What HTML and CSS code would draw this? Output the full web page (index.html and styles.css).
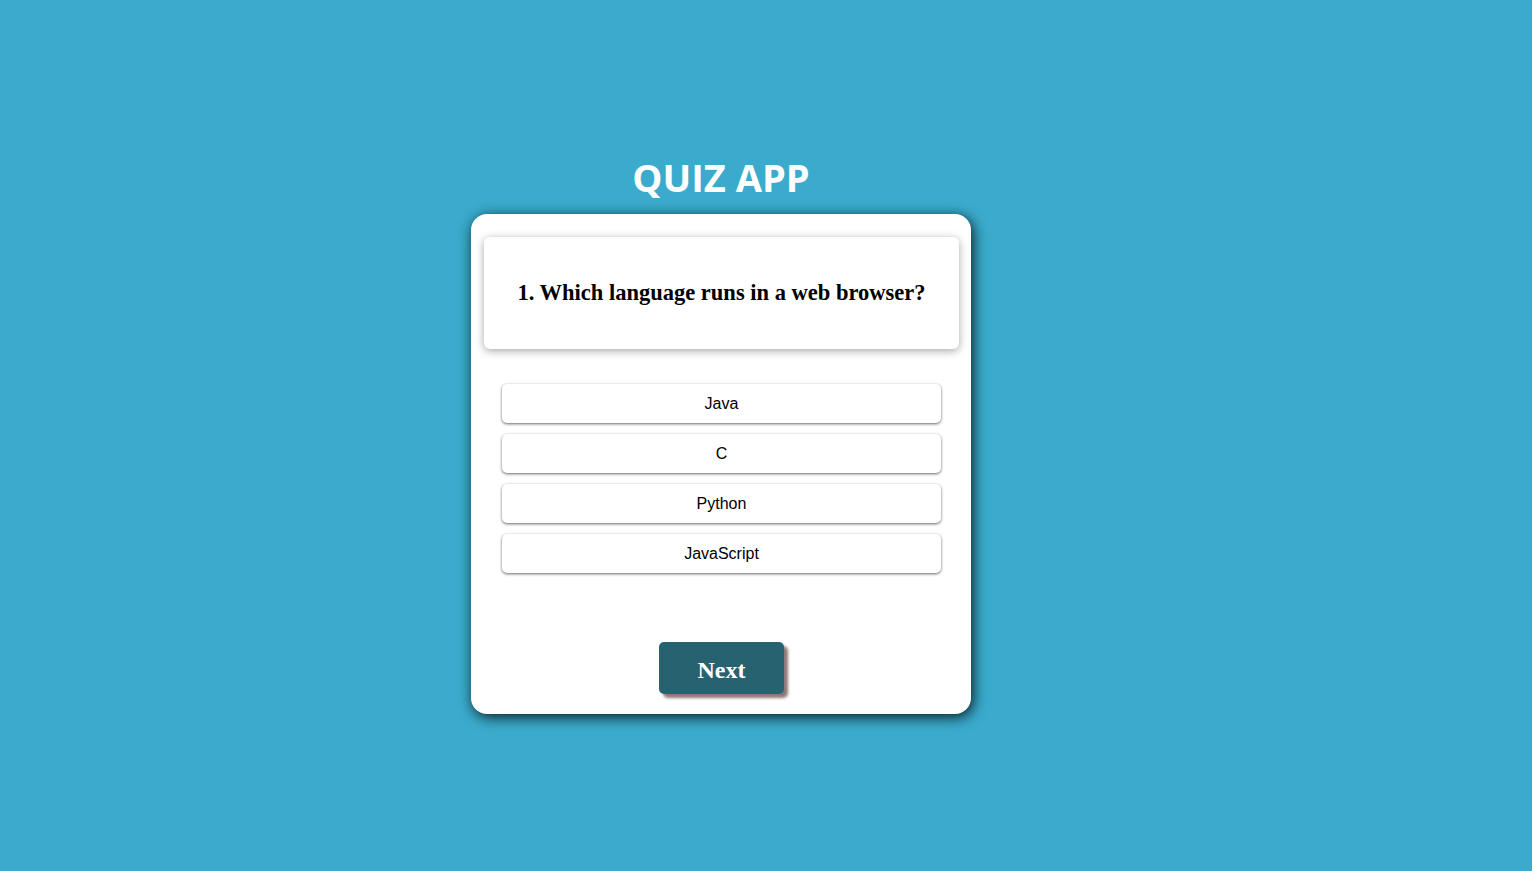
FILE: index.html
```html
<!DOCTYPE html>
<html lang="en">
<head>
<meta charset="utf-8">
<title>Quiz App</title>
<link rel="stylesheet" href="styles.css">
</head>
<body>
<main class="page">
  <h1 class="title">QUIZ APP</h1>
  <section class="card">
    <div class="question-box">
      <h2 class="question">1. Which language runs in a web browser?</h2>
    </div>
    <div class="options">
      <button class="option">Java</button>
      <button class="option">C</button>
      <button class="option">Python</button>
      <button class="option">JavaScript</button>
    </div>
    <div class="actions">
      <button class="next">Next</button>
    </div>
  </section>
</main>
</body>
</html>
```

FILE: styles.css
```css
html, body {
  margin: 0;
  padding: 0;
}
body {
  background: #3aabcc;
  min-height: 100vh;
}
.page {
  display: flex;
  flex-direction: column;
  align-items: center;
  padding-top: 150px;
  padding-right: 90px;
}
.title {
  margin: 0 0 10px 0;
  font-family: "Open Sans", "Noto Sans", sans-serif;
  font-weight: 700;
  font-size: 38px;
  line-height: 54px;
  color: #ffffff;
}
.card {
  box-sizing: border-box;
  width: 500px;
  height: 500px;
  background: #ffffff;
  border-radius: 16px;
  box-shadow: 2px 3px 14px rgba(0, 0, 0, 0.85);
  padding: 23px 12px 20px 13px;
  display: flex;
  flex-direction: column;
  align-items: center;
}
.question-box {
  box-sizing: border-box;
  width: 475px;
  height: 112px;
  background: #ffffff;
  border-radius: 6px;
  box-shadow: 0 2px 8px rgba(0, 0, 0, 0.35);
  display: flex;
  align-items: center;
  justify-content: center;
}
.question {
  margin: 0;
  font-family: "Liberation Serif", "Times New Roman", serif;
  font-weight: 700;
  font-size: 22.5px;
  color: #000000;
}
.options {
  margin-top: 35px;
  width: 439px;
  display: flex;
  flex-direction: column;
  gap: 10px;
}
.option {
  box-sizing: border-box;
  height: 39px;
  width: 100%;
  background: #ffffff;
  border: none;
  border-radius: 5px;
  box-shadow: 0 1px 3px rgba(0, 0, 0, 0.6);
  font-family: "Liberation Sans", Arial, sans-serif;
  font-size: 16px;
  color: #000000;
  padding: 0;
  margin-bottom: 1px;
}
.actions {
  margin-top: auto;
  display: flex;
  justify-content: center;
}
.next {
  box-sizing: border-box;
  width: 125px;
  height: 52px;
  background: #276271;
  color: #ffffff;
  border: none;
  border-radius: 5px;
  box-shadow: 4px 4px 3px rgba(125, 95, 95, 0.85);
  font-family: "Liberation Serif", "Times New Roman", serif;
  font-weight: 700;
  font-size: 24px;
  padding: 4px 0 0 0;
}
```
